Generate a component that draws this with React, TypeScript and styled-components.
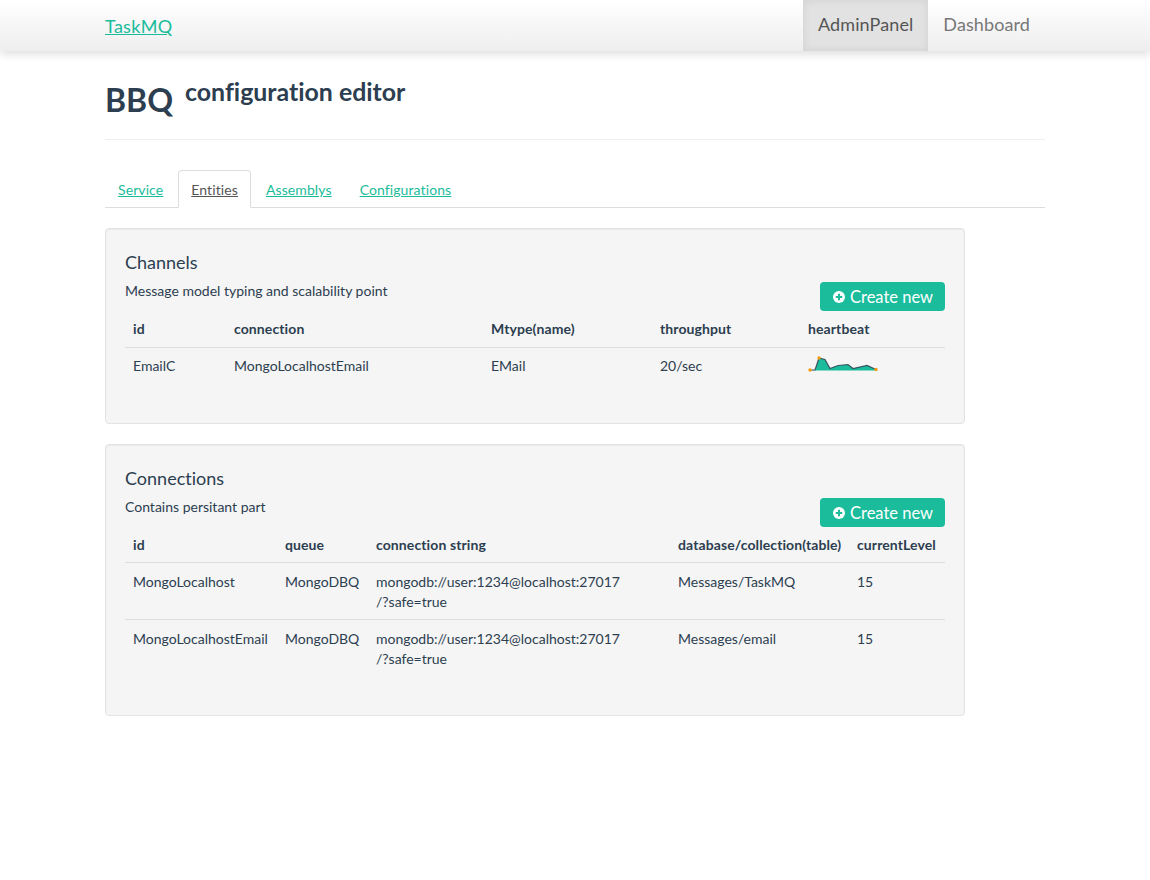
import React from "react";
import styled, { createGlobalStyle } from "styled-components";

const Global = createGlobalStyle`
  html, body { margin: 0; padding: 0; background: #fff; }
  body { font-family: Lato, "Liberation Sans", sans-serif; font-size: 14px; line-height: 20px; color: #2c3e50; font-variant-ligatures: none; }
  * { box-sizing: border-box; }
`;

const Navbar = styled.nav`
  height: 51px;
  background: linear-gradient(to bottom, #ffffff 0%, #eeeeee 100%);
  box-shadow: 0 3px 9px rgba(0, 0, 0, 0.14);
`;
const NavInner = styled.div`
  width: 970px;
  margin: 0 auto;
  padding: 0 15px;
  display: flex;
  justify-content: space-between;
  height: 51px;
`;
const Brand = styled.a`
  font-size: 18px;
  letter-spacing: 0.3px;
  line-height: 53px;
  color: #1abc9c;
  text-decoration: underline;
`;
const NavList = styled.div`
  display: flex;
`;
const NavItem = styled.a<{ $active?: boolean }>`
  font-size: 18px;
  letter-spacing: 0.1px;
  line-height: 48px;
  height: 51px;
  padding: 0 15px;
  color: ${(p) => (p.$active ? "#555" : "#777")};
  background: ${(p) => (p.$active ? "#e2e2e2" : "transparent")};
  box-shadow: ${(p) => (p.$active ? "inset 0 0 8px rgba(0,0,0,0.08)" : "none")};
`;
const Container = styled.main`
  width: 970px;
  margin: 0 auto;
  padding: 0 15px;
`;
const PageHeader = styled.header`
  height: 89px;
  padding-top: 24px;
  border-bottom: 1px solid #eeeeee;
  display: flex;
  align-items: flex-start;
  gap: 12px;
`;
const BigTitle = styled.h1`
  margin: 0;
  font-size: 32px;
  line-height: 50px;
  font-weight: 700;
  color: #2c3e50;
`;
const SubTitle = styled.h2`
  margin: 0;
  font-size: 24.9px;
  line-height: 33px;
  font-weight: 700;
  color: #2c3e50;
`;
const Tabs = styled.div`
  margin-top: 30px;
  height: 38px;
  display: flex;
  border-bottom: 1px solid #dddddd;
`;
const Tab = styled.a<{ $active?: boolean }>`
  height: 38px;
  padding: 9px 12px;
  margin-right: 2px;
  letter-spacing: 0.1px;
  border: 1px solid ${(p) => (p.$active ? "#dddddd" : "transparent")};
  border-bottom-color: ${(p) => (p.$active ? "#ffffff" : "transparent")};
  border-radius: 4px 4px 0 0;
  background: ${(p) => (p.$active ? "#fff" : "transparent")};
  color: ${(p) => (p.$active ? "#555" : "#1abc9c")};
  text-decoration: underline;
`;
const Well = styled.section`
  width: 860px;
  margin-top: 20px;
  padding: 19px;
  background: #f5f5f5;
  border: 1px solid #e3e3e3;
  border-radius: 4px;
  box-shadow: inset 0 1px 1px rgba(0, 0, 0, 0.05);
`;
const WellHead = styled.div`
  display: flex;
  justify-content: space-between;
  align-items: flex-start;
  height: 29px;
`;
const WellTitle = styled.h3`
  margin: 4px 0 10px;
  font-size: 18px;
  line-height: 20px;
  font-weight: 400;
`;
const WellText = styled.p`
  margin: -1px 0 0;
  font-size: 14px;
  line-height: 20px;
`;
const CreateButton = styled.button`
  display: flex;
  align-items: center;
  gap: 5px;
  height: 29px;
  width: 125px;
  padding: 1px 0 0 13px;
  border: 0;
  border-radius: 4px;
  background: #1abc9c;
  color: #fff;
  font: 400 16.5px/28px Lato, "Liberation Sans", sans-serif;
  font-variant-ligatures: none;
`;
const Table = styled.table`
  width: 820px;
  margin-bottom: 19px;
  table-layout: fixed;
  border-collapse: collapse;
`;
const ConnectionsTable = styled(Table)`
  margin-bottom: 20px;
  th {
    padding-bottom: 7px;
  }
  td {
    padding: 9px 8px 7px;
  }
`;
const Th = styled.th`
  padding: 8px;
  text-align: left;
  font-weight: 700;
  letter-spacing: 0.1px;
  line-height: 20px;
  border-bottom: 1px solid #dddddd;
  white-space: nowrap;
`;
const Td = styled.td`
  padding: 8px;
  vertical-align: top;
  line-height: 20px;
  border-top: 1px solid #dddddd;
`;
const TdSpark = styled(Td)`
  padding: 7px 8px 0;
  height: 37px;
`;
const SparkSvg = styled.svg`
  display: block;
`;

const PlusCircle = () => (
  <svg width="12" height="12" viewBox="0 0 12 12" aria-hidden="true">
    <circle cx="6" cy="6" r="6" fill="#fff" />
    <path d="M6 2.8v6.4M2.8 6h6.4" stroke="#1abc9c" strokeWidth="2" />
  </svg>
);

const Spark = () => (
  <SparkSvg width="70" height="18" viewBox="808 355 70 18" aria-hidden="true">
    <path
      d="M810 370 L815 370 L819 358 L825 359.5 L830 368.5 L838 365.5 L848 364.5 L853 368.5 L867 365.5 L876 369.5 L876 370.5 L815 370.5 Z"
      fill="#1abc9c"
    />
    <path
      d="M810 370 L815 370 L819 358 L825 359.5 L830 368.5 L838 365.5 L848 364.5 L853 368.5 L867 365.5 L876 369.5"
      fill="none"
      stroke="#2c3e50"
      strokeWidth="1.2"
      strokeOpacity="0.85"
    />
    <circle cx="810" cy="370" r="1.7" fill="#f39c12" />
    <circle cx="819" cy="358" r="1.7" fill="#f39c12" />
    <circle cx="876" cy="369.5" r="1.7" fill="#f39c12" />
  </SparkSvg>
);

const Head = ({ title, text }: { title: string; text: string }) => (
  <>
    <WellTitle>{title}</WellTitle>
    <WellHead>
      <WellText>{text}</WellText>
      <CreateButton>
        <PlusCircle />
        Create new
      </CreateButton>
    </WellHead>
  </>
);

export default function App() {
  return (
    <>
      <Global />
      <Navbar>
        <NavInner>
          <Brand>TaskMQ</Brand>
          <NavList>
            <NavItem $active>AdminPanel</NavItem>
            <NavItem>Dashboard</NavItem>
          </NavList>
        </NavInner>
      </Navbar>
      <Container>
        <PageHeader>
          <BigTitle>BBQ</BigTitle>
          <SubTitle>configuration editor</SubTitle>
        </PageHeader>
        <Tabs>
          <Tab>Service</Tab>
          <Tab $active>Entities</Tab>
          <Tab>Assemblys</Tab>
          <Tab>Configurations</Tab>
        </Tabs>
        <Well>
          <Head title="Channels" text="Message model typing and scalability point" />
          <Table>
            <colgroup>
              <col width="101" />
              <col width="257" />
              <col width="169" />
              <col width="148" />
              <col width="145" />
            </colgroup>
            <thead>
              <tr>
                <Th>id</Th>
                <Th>connection</Th>
                <Th>Mtype(name)</Th>
                <Th>throughput</Th>
                <Th>heartbeat</Th>
              </tr>
            </thead>
            <tbody>
              <tr>
                <Td>EmailC</Td>
                <Td>MongoLocalhostEmail</Td>
                <Td>EMail</Td>
                <Td>20/sec</Td>
                <TdSpark>
                  <Spark />
                </TdSpark>
              </tr>
            </tbody>
          </Table>
        </Well>
        <Well>
          <Head title="Connections" text="Contains persitant part" />
          <ConnectionsTable>
            <colgroup>
              <col width="152" />
              <col width="91" />
              <col width="302" />
              <col width="179" />
              <col width="96" />
            </colgroup>
            <thead>
              <tr>
                <Th>id</Th>
                <Th>queue</Th>
                <Th>connection string</Th>
                <Th>database/collection(table)</Th>
                <Th>currentLevel</Th>
              </tr>
            </thead>
            <tbody>
              <tr>
                <Td>MongoLocalhost</Td>
                <Td>MongoDBQ</Td>
                <Td>
                  mongodb://user:1234@localhost:27017
                  <br />
                  /?safe=true
                </Td>
                <Td>Messages/TaskMQ</Td>
                <Td>15</Td>
              </tr>
              <tr>
                <Td>MongoLocalhostEmail</Td>
                <Td>MongoDBQ</Td>
                <Td>
                  mongodb://user:1234@localhost:27017
                  <br />
                  /?safe=true
                </Td>
                <Td>Messages/email</Td>
                <Td>15</Td>
              </tr>
            </tbody>
          </ConnectionsTable>
        </Well>
      </Container>
    </>
  );
}
